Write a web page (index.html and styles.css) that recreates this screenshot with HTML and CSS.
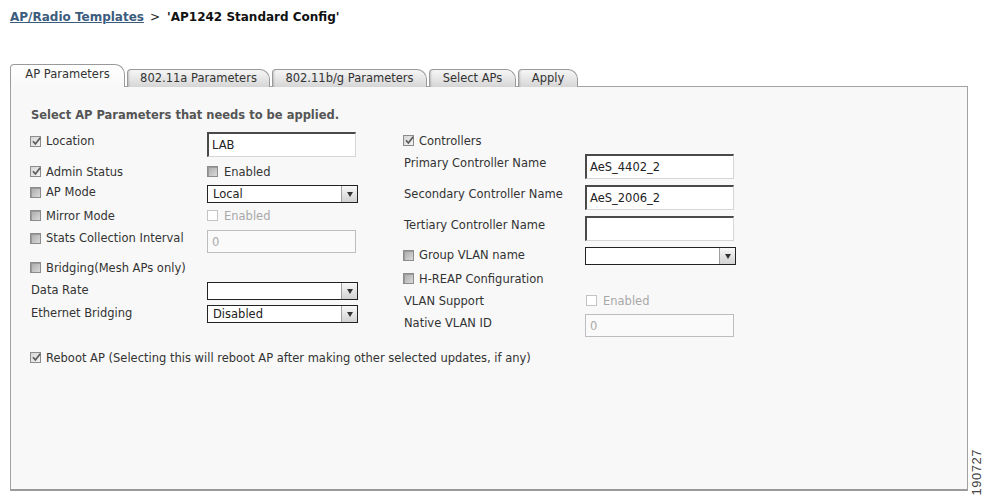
FILE: index.html
```html
<!DOCTYPE html>
<html>
<head>
<meta charset="utf-8">
<link rel="stylesheet" href="styles.css">
</head>
<body>
<div class="crumb"><a class="crumb-link" href="#">AP/Radio Templates</a><span class="crumb-sep">&gt;</span><span class="crumb-title">'AP1242 Standard Config'</span></div>

<div class="page">
  <div class="main">
    <div class="tabs">
      <div class="tab active w1">AP Parameters</div>
      <div class="tab w2">802.11a Parameters</div>
      <div class="tab w3">802.11b/g Parameters</div>
      <div class="tab w4">Select APs</div>
      <div class="tab w5">Apply</div>
    </div>
    <div class="panel">
      <div class="heading">Select AP Parameters that needs to be applied.</div>
      <div class="cols">
        <div class="col left">
          <div class="row h25">
            <div class="lab up35"><span class="cb on"><svg viewBox="0 0 11 11"><path d="M2 5.2 L4.4 8 L9.2 1.8"/></svg></span>Location</div>
            <div class="input">LAB</div>
          </div>
          <div class="row h13 mt8">
            <div class="lab"><span class="cb on"><svg viewBox="0 0 11 11"><path d="M2 5.2 L4.4 8 L9.2 1.8"/></svg></span>Admin Status</div>
            <div class="chk"><span class="cb off"></span>Enabled</div>
          </div>
          <div class="row h18 mt7">
            <div class="lab up2"><span class="cb off"></span>AP Mode</div>
            <div class="select"><span class="sel-val">Local</span><span class="sel-btn"><i></i></span></div>
          </div>
          <div class="row h13 mt6">
            <div class="lab"><span class="cb off"></span>Mirror Mode</div>
            <div class="chk dis"><span class="cb dis"></span>Enabled</div>
          </div>
          <div class="row h23 mt8">
            <div class="lab up35"><span class="cb off"></span>Stats Collection Interval</div>
            <div class="input dis">0</div>
          </div>
          <div class="row h13 mt8">
            <div class="lab"><span class="cb off"></span>Bridging(Mesh APs only)</div>
          </div>
          <div class="row h18 mt8">
            <div class="lab plain up1">Data Rate</div>
            <div class="select"><span class="sel-val"></span><span class="sel-btn"><i></i></span></div>
          </div>
          <div class="row h18 mt5">
            <div class="lab plain up1">Ethernet Bridging</div>
            <div class="select"><span class="sel-val">Disabled</span><span class="sel-btn"><i></i></span></div>
          </div>
        </div>
        <div class="col right">
          <div class="row h13 mt2">
            <div class="lab"><span class="cb on"><svg viewBox="0 0 11 11"><path d="M2 5.2 L4.4 8 L9.2 1.8"/></svg></span>Controllers</div>
          </div>
          <div class="row h25 mt7">
            <div class="lab plain up35">Primary Controller Name</div>
            <div class="input">AeS_4402_2</div>
          </div>
          <div class="row h25 mt6">
            <div class="lab plain up35">Secondary Controller Name</div>
            <div class="input">AeS_2006_2</div>
          </div>
          <div class="row h25 mt6">
            <div class="lab plain up35">Tertiary Controller Name</div>
            <div class="input"></div>
          </div>
          <div class="row h18 mt6">
            <div class="lab up1"><span class="cb off"></span>Group VLAN name</div>
            <div class="select"><span class="sel-val"></span><span class="sel-btn"><i></i></span></div>
          </div>
          <div class="row h13 mt7">
            <div class="lab"><span class="cb off"></span>H-REAP Configuration</div>
          </div>
          <div class="row h13 mt9">
            <div class="lab plain">VLAN Support</div>
            <div class="chk dis"><span class="cb dis"></span>Enabled</div>
          </div>
          <div class="row h23 mt7">
            <div class="lab plain up25">Native VLAN ID</div>
            <div class="input dis">0</div>
          </div>
        </div>
      </div>
      <div class="row h13 reboot">
        <div class="lab wide"><span class="cb on"><svg viewBox="0 0 11 11"><path d="M2 5.2 L4.4 8 L9.2 1.8"/></svg></span>Reboot AP (Selecting this will reboot AP after making other selected updates, if any)</div>
      </div>
    </div>
  </div>
  <div class="fig">190727</div>
</div>
</body>
</html>
```
FILE: styles.css
```css
* { box-sizing: border-box; }
html, body { margin: 0; padding: 0; background: #fff; }
body {
  font-family: "DejaVu Sans", Verdana, sans-serif;
  font-size: 11.5px;
  color: #333;
  width: 985px;
  height: 501px;
  overflow: hidden;
}

.crumb {
  margin: 10px 0 0 10px;
  height: 14px;
  line-height: 14px;
  font-size: 12px;
  font-weight: bold;
  display: flex;
  white-space: nowrap;
}
.crumb-link { color: #3b5c7d; text-decoration: underline; }
.crumb-sep { color: #222; font-weight: normal; margin: 0 7px 0 6px; }
.crumb-title { color: #111; }

.page {
  display: flex;
  margin: 40px 0 0 10px;
}
.main { width: 958px; }

.tabs {
  display: flex;
  align-items: flex-end;
  gap: 2px;
  height: 23px;
  margin-bottom: -1px;
  position: relative;
  z-index: 2;
}
.tab {
  height: 18px;
  border: 1px solid #9a9a9a;
  border-bottom: none;
  border-radius: 4px 10px 0 0;
  background: linear-gradient(#f6f6f6, #d6d6d6);
  box-shadow: inset 2px 0 2px -1px rgba(0, 0, 0, 0.18);
  color: #333;
  text-align: center;
  line-height: 17px;
  white-space: nowrap;
}
.tab.active {
  height: 23px;
  background: linear-gradient(#ffffff, #f8f8f8);
  box-shadow: none;
  line-height: 19px;
  border-color: #9a9a9a;
}
.w1 { width: 115px; }
.w2 { width: 143px; }
.w3 { width: 155px; }
.w4 { width: 87px; }
.w5 { width: 60px; }

.panel {
  height: 405px;
  border: 1px solid #a3a3a3;
  border-bottom: 2px solid #9a9a9a;
  background: #f8f8f8;
  padding: 21px 0 0 19px;
}

.heading {
  margin-left: 1px;
  height: 14px;
  line-height: 14px;
  font-weight: bold;
  color: #555;
  white-space: nowrap;
}

.cols {
  display: flex;
  margin-top: 10px;
}
.col { display: flex; flex-direction: column; }
.col.left { width: 373px; }
.col.left .lab { width: 177px; }
.col.right .lab { width: 182px; }

.row {
  display: flex;
  align-items: center;
}
.h13 { height: 13px; }
.h18 { height: 18px; }
.h23 { height: 23px; }
.h25 { height: 25px; }
.mt2 { margin-top: 2px; }
.mt5 { margin-top: 5px; }
.mt6 { margin-top: 6px; }
.mt7 { margin-top: 7px; }
.mt8 { margin-top: 8px; }
.mt9 { margin-top: 9px; }

.lab {
  display: flex;
  align-items: center;
  height: 14px;
  line-height: 14px;
  white-space: nowrap;
  flex: none;
}
.lab.plain { padding-left: 1px; }
.lab.wide { width: auto; }
.up1 { margin-bottom: 2px; }
.up2 { margin-bottom: 4px; }
.up25 { margin-bottom: 5px; }
.up35 { margin-bottom: 7px; }

.reboot { margin-top: 14px; }

.cb {
  width: 11px;
  height: 11px;
  margin-right: 5px;
  flex: none;
  display: inline-block;
  border: 1px solid #8c8c8c;
  position: relative;
}
.cb.on {
  background: linear-gradient(135deg, #d6d6d6, #f4f4f4);
}
.cb.on svg {
  position: absolute;
  left: 0;
  top: -1px;
  width: 11px;
  height: 11px;
  fill: none;
  stroke: #5a5a5a;
  stroke-width: 1.7;
}
.cb.off {
  background: linear-gradient(135deg, #a9a9a9, #d9d9d9);
  box-shadow: inset 1px 1px 0 #9a9a9a;
}
.cb.dis {
  background: #fff;
  border-color: #c4c4c4;
}

.chk {
  display: flex;
  align-items: center;
  height: 14px;
  line-height: 14px;
  color: #333;
}
.chk .cb { margin-right: 6px; }
.chk.dis { color: #a8a8a8; }
.col.right .chk { margin-left: 1px; }

.input {
  width: 149px;
  height: 100%;
  background: #fff;
  border-top: 2px solid #4a4a4a;
  border-left: 2px solid #4a4a4a;
  border-right: 1px solid #d6d6d6;
  border-bottom: 1px solid #d6d6d6;
  padding: 0 0 0 3px;
  display: flex;
  align-items: center;
  color: #222;
  white-space: nowrap;
}
.input.dis {
  border: 1px solid #bdbdbd;
  background: #fafafa;
  color: #aaa;
  padding-left: 4px;
}

.select {
  width: 151px;
  height: 18px;
  border: 1px solid #222;
  background: #fff;
  display: flex;
}
.sel-val {
  flex: 1;
  padding-left: 5px;
  line-height: 17px;
  color: #222;
  white-space: nowrap;
}
.sel-btn {
  width: 16px;
  height: 100%;
  border-left: 1px solid #a0a0a0;
  background: linear-gradient(#f7f7f7, #d2d2d2);
  display: flex;
  align-items: center;
  justify-content: center;
}
.sel-btn i {
  width: 0;
  height: 0;
  border-left: 3.5px solid transparent;
  border-right: 3.5px solid transparent;
  border-top: 5px solid #333;
}

.fig {
  align-self: flex-end;
  margin: 0 0 -4px 1px;
  width: 15px;
  writing-mode: vertical-rl;
  transform: rotate(180deg);
  font-family: "Liberation Sans", Arial, sans-serif;
  font-size: 13px;
  color: #444;
  line-height: 15px;
  letter-spacing: 0.5px;
}
```
